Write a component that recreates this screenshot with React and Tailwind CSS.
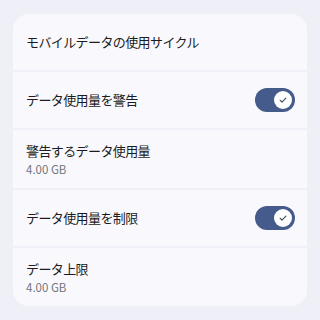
import React from 'react';

const Toggle = () => (
    <div className="w-[40px] h-[24px] rounded-full bg-[#445b8b] flex items-center justify-end pr-[3px]">
        <div className="w-[18px] h-[18px] rounded-full bg-white flex items-center justify-center">
            <svg width="10" height="10" viewBox="0 0 24 24" fill="none" stroke="#3f4759" strokeWidth="2.6" strokeLinecap="round" strokeLinejoin="round">
                <path d="M5 12.5l4.5 4.5L19 7.5" />
            </svg>
        </div>
    </div>
);

const Row = ({ title, sub, toggle, h }) => (
    <div className={`bg-[#f9f9fd] flex items-center justify-between pl-[13px] pr-[12px] ${h}`}>
        <div className="flex flex-col">
            <span className="text-[13px] tracking-[-0.6px] leading-[20px] text-[#1b1c21]">{title}</span>
            {sub && <span className="text-[11.5px] leading-[17px] text-[#71747c]">{sub}</span>}
        </div>
        {toggle && <Toggle />}
    </div>
);

export default function App() {
    return (
        <div className="w-[320px] h-[320px] bg-[#eff0f7] pt-[14px] px-[13px]" style={{ fontFamily: '"Noto Sans CJK JP", "Noto Sans", sans-serif' }}>
            <div className="rounded-[16px] overflow-hidden flex flex-col gap-[2px] w-[294px]">
                <Row title="モバイルデータの使用サイクル" h="h-[56px]" />
                <Row title="データ使用量を警告" toggle h="h-[56px]" />
                <Row title="警告するデータ使用量" sub="4.00 GB" h="h-[58px]" />
                <Row title="データ使用量を制限" toggle h="h-[56px]" />
                <Row title="データ上限" sub="4.00 GB" h="h-[58px]" />
            </div>
        </div>
    );
}
